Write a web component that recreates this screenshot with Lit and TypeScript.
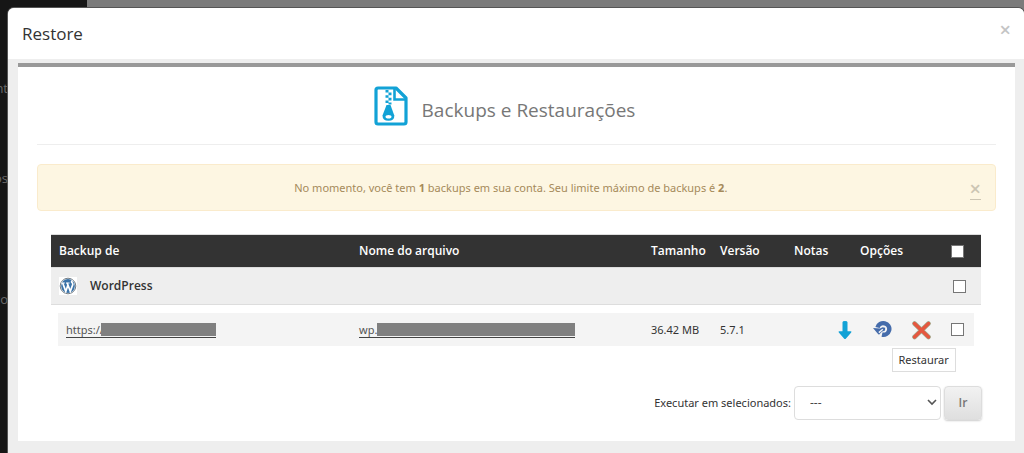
import { LitElement, html, css } from "lit";
import { customElement, state } from "lit/decorators.js";

@customElement("page-backdrop")
export class PageBackdrop extends LitElement {
  static styles = css`
    :host {
      display: flex;
      overflow: hidden;
      background: #7b7b7b;
      font: 13px/20px "Open Sans", sans-serif;
    }
    .sidebar {
      box-sizing: border-box;
      width: 87px;
      padding-top: 78px;
      background: #161616;
      color: #6b6b6b;
    }
    .sidebar span {
      display: block;
      width: 8px;
      overflow: hidden;
      direction: rtl;
    }
    .first {
      margin-bottom: 70px;
    }
    .second {
      margin-bottom: 101px;
    }
  `;
  render() {
    return html`<div class="sidebar">
      <span class="first">nt</span>
      <span class="second">os</span>
      <span>ro</span>
    </div>`;
  }
}

@customElement("backup-table")
export class BackupTable extends LitElement {
  @state() tip = true;

  static styles = css`
    :host {
      display: block;
      color: #333;
    }
    table {
      width: 100%;
      table-layout: fixed;
      border-collapse: separate;
      border-spacing: 0;
    }
    .c-from { width: 300px; }
    .c-size { width: 69px; }
    .c-version { width: 74px; }
    .c-notes { width: 42px; }
    .c-options { width: 107px; }
    .c-select { width: 46px; }
    th,
    td {
      padding: 0 8px;
      text-align: left;
      white-space: nowrap;
    }
    thead th {
      height: 32px;
      background: #333;
      color: #fff;
      font-family: "Open Sans", sans-serif;
      font-size: 12px;
      font-weight: 600;
      border-top: 1px solid #ddd;
      border-bottom: 1px solid #ddd;
    }
    thead .options {
      text-align: center;
    }
    .group th {
      height: 36px;
      background: #eee;
      border-bottom: 1px solid #ddd;
      font-family: "Open Sans", sans-serif;
      font-weight: 600;
      font-size: 12px;
    }
    .item td {
      height: 33px;
      background: #f4f4f4;
      background-clip: padding-box;
      border-top: 8px solid transparent;
    }
    .item td:first-child {
      border-left: 7px solid transparent;
    }
    .item td:last-child {
      border-right: 7px solid transparent;
    }
    .app {
      display: flex;
      align-items: center;
      gap: 13px;
    }
    .app svg {
      background: #fff;
    }
    .link {
      display: inline-flex;
      color: #555;
      line-height: 14px;
      text-decoration: none;
      border-bottom: 1px solid #444;
    }
    .mask {
      height: 13px;
      background: #808080;
    }
    .mask.site {
      width: 115px;
      margin-left: -3px;
    }
    .mask.file { width: 198px; }
    th.select,
    td.select {
      padding: 0 0 0 16px;
    }
    .group th.select {
      padding-left: 18px;
    }
    input {
      appearance: none;
      display: block;
      box-sizing: border-box;
      width: 13px;
      height: 13px;
      margin: 0;
      background: #fff;
      border: 1px solid #767676;
    }
    input:checked {
      background: #1b74d8;
    }
    .options .actions {
      display: flex;
      justify-content: space-between;
    }
    td.options {
      padding: 0 4px 0 10px;
    }
    button {
      display: block;
      position: relative;
      padding: 0;
      border: 0;
      background: none;
      color: inherit;
      font: inherit;
      cursor: pointer;
    }
    svg {
      display: block;
    }
    .tip {
      position: absolute;
      top: 28px;
      left: 19px;
      padding: 0 6px;
      line-height: 22px;
      background: #fff;
      border: 1px solid #ddd;
      white-space: nowrap;
    }
  `;

  render() {
    return html`<table>
      <colgroup>
        <col class="c-from" />
        <col />
        <col class="c-size" />
        <col class="c-version" />
        <col class="c-notes" />
        <col class="c-options" />
        <col class="c-select" />
      </colgroup>
      <thead>
        <tr>
          <th scope="col">Backup de</th>
          <th scope="col">Nome do arquivo</th>
          <th scope="col">Tamanho</th>
          <th scope="col">Versão</th>
          <th scope="col">Notas</th>
          <th scope="col" class="options">Opções</th>
          <th scope="col" class="select"><input type="checkbox" aria-label="Todos" /></th>
        </tr>
      </thead>
      <tbody>
        <tr class="group">
          <th scope="rowgroup" colspan="6">
            <div class="app">
              <svg width="18" height="18" viewBox="0 0 18 18" aria-hidden="true">
                <circle cx="9" cy="9" r="7.8" fill="#fff" stroke="#777f86" stroke-width="1" />
                <circle cx="9" cy="9" r="6.9" fill="#3b73a8" />
                <path d="M2.2 6h3.6M7 6h3.6" stroke="#fff" stroke-width="1.2" />
                <path d="M3.7 6L6.8 14.4L9.1 7.6M8.2 6L11.3 14.4L13.8 7.6Q13.9 6.2 12.7 5.2Q12.3 3.8 13.7 3.8" fill="none" stroke="#fff" stroke-width="1.7" />
              </svg>
              <span>WordPress</span>
            </div>
          </th>
          <th class="select"><input type="checkbox" aria-label="WordPress" /></th>
        </tr>
        <tr class="item">
          <td><a class="link" href="#site">https://<span class="mask site"></span></a></td>
          <td><a class="link" href="#file">wp.<span class="mask file"></span></a></td>
          <td>36.42 MB</td>
          <td>5.7.1</td>
          <td></td>
          <td class="options">
            <div class="actions">
              <button type="button" aria-label="Download">
                <svg width="14" height="20" viewBox="0 0 14 20">
                  <path d="M4.5 2.2Q4.5 1 7 1T9.5 2.2V11.3H12.6Q14 11.3 13.2 12.5L8 18.4Q7 19.4 6 18.4L.8 12.5Q0 11.3 1.4 11.3H4.5Z" fill="#12a2d6" />
                </svg>
              </button>
              <button type="button" aria-label="Restaurar" @click=${() => (this.tip = !this.tip)}>
                <svg width="19" height="20" viewBox="0 0 19 20">
                  <path d="M4.5 7.5A6 5.8 0 1 1 9 14.6" fill="none" stroke="#456cab" stroke-width="4.4" />
                  <path d="M0 8L7 8.5L9.5 7.2L12.2 7.8L12 10.6L8.8 11.8L6 14.8L4.6 13.4Z" fill="#456cab" />
                  <path d="M5.8 12.6L9.8 9.2" stroke="#f4f4f4" stroke-width="1.4" />
                </svg>
                ${this.tip ? html`<span class="tip">Restaurar</span>` : ""}
              </button>
              <button type="button" aria-label="Remover">
                <svg width="19" height="20" viewBox="0 0 19 20">
                  <path d="M2.5 3.5L16.5 17M16.5 3.5L2.5 17" stroke="#a0ad91" stroke-width="4.6" stroke-linecap="round" />
                  <path d="M2.5 3.5L16.5 17M16.5 3.5L2.5 17" stroke="#e5573f" stroke-width="3.5" stroke-linecap="round" />
                </svg>
              </button>
            </div>
          </td>
          <td class="select"><input type="checkbox" aria-label="Backup" /></td>
        </tr>
      </tbody>
    </table>`;
  }
}

@customElement("app-root")
export class AppRoot extends LitElement {
  static styles = css`
    :host {
      display: block;
      position: relative;
      box-sizing: border-box;
      min-height: 100vh;
      padding: 8px 0 0 8px;
      font: 11px/18px "Noto Sans", "Open Sans", sans-serif;
      color: #333;
    }
    page-backdrop {
      position: absolute;
      inset: 0;
    }
    .modal {
      position: relative;
      box-sizing: border-box;
      min-height: calc(100vh - 8px);
      background: #eee;
      border-radius: 6px 6px 0 0;
      overflow: hidden;
      box-shadow: 0 0 0 1px #555;
    }
    header {
      display: flex;
      align-items: center;
      justify-content: space-between;
      height: 51px;
      padding: 0 13px 0 14px;
      background: #fff;
    }
    h1,
    h2 {
      font-family: "Open Sans", sans-serif;
      font-weight: 400;
    }
    h1 {
      margin: 0;
      font-size: 17px;
      line-height: 24px;
    }
    .close {
      padding: 0;
      border: 0;
      background: none;
      color: #c4c4c4;
      font: 600 20px/20px "Open Sans", sans-serif;
      cursor: pointer;
    }
    header .close {
      margin-bottom: 8px;
    }
    .alert .close {
      color: #ccc5b3;
      border-bottom: 1px solid #ccc5b3;
      margin-top: 4px;
    }
    .panel {
      margin: 4px 9px 0 10px;
      padding: 0 19px 21px;
      border-top: 4px solid #999;
      background: #fff;
    }
    .heading {
      display: flex;
      align-items: center;
      justify-content: center;
      gap: 14px;
      height: 77px;
      padding-right: 24px;
      border-bottom: 1px solid #eee;
      color: #777;
    }
    h2 {
      margin: 8px 0 0;
      font-size: 19px;
      line-height: 26px;
    }
    .alert {
      display: flex;
      align-items: center;
      height: 45px;
      margin-top: 19px;
      padding: 0 14px;
      background: #fdf6e2;
      border: 1px solid #faebcc;
      border-radius: 4px;
      color: #a58a5a;
    }
    .alert p {
      flex: 1;
      margin: 0;
      text-align: center;
    }
    backup-table {
      margin: 23px 15px 0 14px;
    }
    .bulk {
      display: flex;
      align-items: center;
      justify-content: flex-end;
      gap: 3px;
      margin: 40px 14px 0 0;
    }
    select,
    .go {
      box-sizing: border-box;
      height: 34px;
      border: 1px solid #ddd;
      border-radius: 4px;
      color: #444;
      font: 12px/18px "Open Sans", sans-serif;
    }
    .pick {
      display: grid;
      align-items: center;
    }
    .pick > * {
      grid-area: 1 / 1;
    }
    select {
      appearance: none;
      width: 147px;
      padding: 0 15px;
      background: #fff;
    }
    .pick svg {
      justify-self: end;
      margin-right: 3px;
      pointer-events: none;
    }
    .go {
      width: 38px;
      padding: 0;
      background: linear-gradient(#f2f2f2, #dfdfdf);
      box-shadow: 0 1px 2px #ccc;
      color: #777;
      font-weight: 600;
    }
  `;

  render() {
    return html`
      <page-backdrop aria-hidden="true"></page-backdrop>
      <section class="modal" role="dialog" aria-labelledby="title">
        <header>
          <h1 id="title">Restore</h1>
          <button class="close" type="button" aria-label="Fechar">×</button>
        </header>
        <main class="panel">
          <div class="heading">
            <svg width="34" height="40" viewBox="0 0 34 40" aria-hidden="true">
              <path d="M22 2H4Q2 2 2 4V36Q2 38 4 38H30Q32 38 32 36V12Z" fill="none" stroke="#12a2d6" stroke-width="3.2" stroke-linejoin="round" />
              <path d="M20.5 2V13.5H32" fill="none" stroke="#12a2d6" stroke-width="2.6" />
              <path d="M13 4v2.600M16 6.600v2.600M13 9.200v2.600M16 11.800v2.600M13 14.400v2.600M16 16.400v2" stroke="#12a2d6" stroke-width="3" />
              <path d="M12.5 19H16.500L20.300 29.500Q20.500 34.800 14.500 34.800T8.500 29.500Z" fill="#12a2d6" />
              <ellipse cx="14.5" cy="30.8" rx="3" ry="1.8" fill="#fff" />
            </svg>
            <h2>Backups e Restaurações</h2>
          </div>
          <div class="alert" role="status">
            <p>No momento, você tem <b>1</b> backups em sua conta. Seu limite máximo de backups é <b>2</b>.</p>
            <button class="close" type="button" aria-label="Fechar aviso">×</button>
          </div>
          <backup-table></backup-table>
          <form class="bulk" @submit=${(e: Event) => e.preventDefault()}>
            <label for="action">Executar em selecionados:</label>
            <span class="pick">
              <select id="action">
                <option>---</option>
              </select>
              <svg width="12" height="10" viewBox="0 0 12 10" aria-hidden="true">
                <path d="M2 2L6 6L10 2" fill="none" stroke="#555" stroke-width="1.6" />
              </svg>
            </span>
            <button class="go" type="submit">Ir</button>
          </form>
        </main>
      </section>
    `;
  }
}
